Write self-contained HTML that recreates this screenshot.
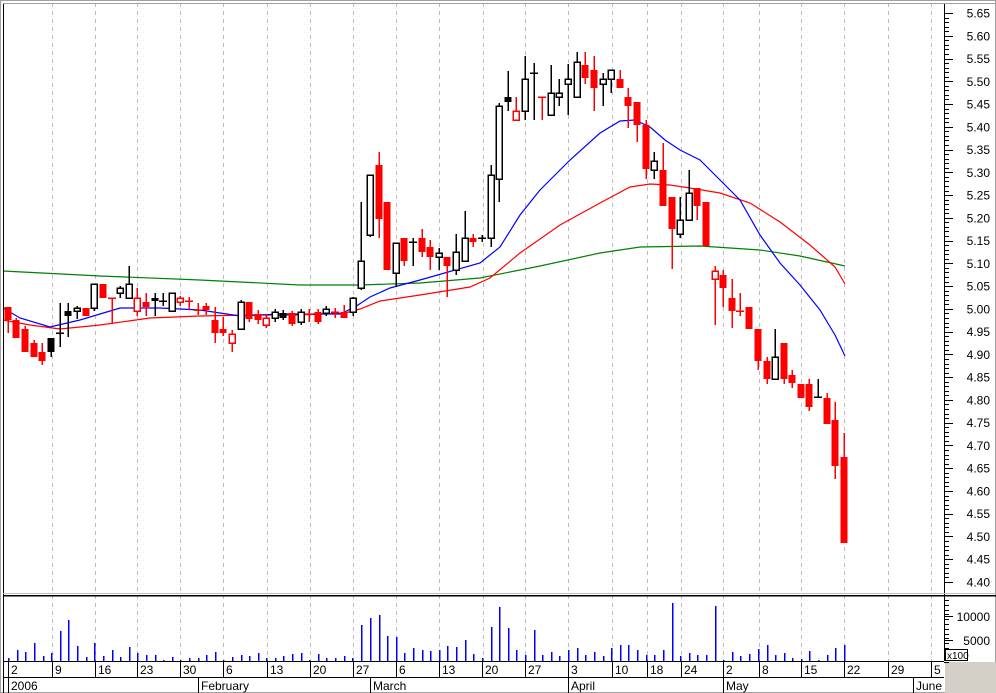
<!DOCTYPE html>
<html><head><meta charset="utf-8">
<style>
html,body{margin:0;padding:0;background:#fff;width:996px;height:693px;overflow:hidden}
svg text{font-family:"Liberation Sans",Arial,sans-serif;font-size:12px;fill:#000}
</style></head><body>
<svg id="s" width="996" height="693" xmlns="http://www.w3.org/2000/svg" shape-rendering="crispEdges">
<rect x="0" y="0" width="996" height="693" fill="#fff"/>
<g id="grid"></g>
<g id="ma" shape-rendering="auto"></g>
<g id="cd"></g>
<g id="vol"></g>
<g id="ax"></g>
</svg>
<script>
var NS="http://www.w3.org/2000/svg";
function el(p,t,a,txt){var e=document.createElementNS(NS,t);for(var k in a)e.setAttribute(k,a[k]);if(txt!=null)e.textContent=txt;document.getElementById(p).appendChild(e);return e;}
// grid dashed verticals
var gx=[52,95,137,180,223,267,310,353,396,439,483,525,568,612,647,681,723,759,801,844,888,931];
gx.forEach(function(x){el('grid','line',{x1:x+.5,y1:3,x2:x+.5,y2:661,stroke:'#bdbdbd','stroke-dasharray':'4,4'});});
// MAs
function pl(pts,c){el('ma','polyline',{points:pts.map(function(p){return p.join(',')}).join(' '),fill:'none',stroke:c,'stroke-width':1.2});}
pl([[3,271],[100,276],[200,280],[300,285],[360,285],[420,283],[480,278],[540,266],[600,253],[640,247],[700,246],[760,250],[800,256],[845,266]],'#008000');
pl([[3,320],[30,325],[60,329],[100,325],[150,318],[200,316],[250,315],[300,315],[345,313],[360,309],[380,301],[420,295],[470,287],[490,278],[520,253],[560,225],[600,203],[630,187],[650,184],[670,185],[690,188],[720,193],[750,203],[780,222],[810,245],[835,267],[845,284]],'#ff0000');
pl([[3,308],[20,318],[50,327],[80,320],[120,308],[160,308],[200,310],[240,316],[280,314],[340,314],[355,307],[370,297],[390,288],[420,280],[480,263],[500,247],[520,215],[540,190],[570,160],[600,133],[620,121],[635,120],[650,127],[665,140],[680,150],[700,160],[720,180],[740,200],[760,235],[780,263],[800,285],[820,310],[835,335],[845,356]],'#0000ff');
// candles [x,hi,lo,top,bot,type] r=red fill, w=hollow black, b=black fill, o=red hollow, c=black cross, rc=red cross
var C=[
[8,307,333,307,320,'r'],[16,318,338,320,338,'r'],[25,326,352,329,352,'r'],[34,340,357,343,357,'r'],[42,343,365,352,361,'r'],
[51,338,357,338,352,'b'],[60,303,347,333,333,'c'],[68,303,337,311,316,'b'],[77,306,319,308,311,'w'],[86,308,316,308,316,'r'],
[94,284,311,284,308,'w'],[103,284,298,284,298,'r'],[112,298,324,298,300,'rc'],[120,286,298,288,293,'w'],[129,266,298,284,298,'w'],
[137,288,316,298,311,'o'],[146,293,316,302,307,'r'],[155,293,316,298,301,'b'],[163,293,306,301,301,'c'],[172,293,311,293,311,'w'],
[180,296,306,298,302,'o'],[189,297,310,301,301,'rc'],[198,303,315,310,310,'rc'],[206,303,315,306,310,'r'],[215,307,343,320,333,'r'],
[223,317,336,329,333,'r'],[232,330,352,334,343,'o'],[241,300,330,302,329,'w'],[249,302,322,302,319,'r'],[258,310,324,314,320,'r'],
[266,314,328,318,325,'o'],[275,309,322,312,318,'w'],[283,310,320,313,318,'b'],[292,311,326,313,324,'r'],[301,309,325,312,322,'w'],
[309,309,322,314,314,'rc'],[318,309,324,312,322,'r'],[326,306,316,309,313,'w'],[335,308,318,312,312,'rc'],[344,305,318,312,318,'r'],
[353,297,316,298,312,'w'],[361,202,290,261,288,'w'],[370,175,237,175,235,'w'],[379,152,238,165,219,'r'],[387,202,270,202,270,'r'],
[396,243,287,243,273,'w'],[404,238,266,238,261,'r'],[413,238,266,242,242,'c'],[422,229,257,238,252,'r'],[430,240,270,247,257,'r'],
[439,248,270,253,257,'w'],[447,257,297,257,266,'r'],[456,234,275,252,270,'w'],[465,211,260,238,261,'w'],[473,234,247,238,242,'r'],
[482,235,242,238,238,'c'],[491,165,247,175,238,'w'],[499,103,202,106,179,'w'],[508,71,111,97,102,'b'],[516,97,120,111,120,'o'],
[525,56,120,79,111,'w'],[534,63,120,73,73,'c'],[542,97,120,97,97,'rc'],[551,65,115,93,115,'w'],[559,79,106,93,97,'w'],
[568,64,115,79,84,'w'],[577,52,97,62,97,'w'],[585,52,84,65,78,'r'],[594,56,111,70,88,'r'],[603,73,106,79,84,'w'],
[611,70,93,70,79,'w'],[620,70,88,79,88,'r'],[628,88,128,97,106,'r'],[637,102,142,102,125,'r'],[646,120,179,125,169,'r'],
[654,152,179,161,170,'w'],[663,143,206,170,206,'r'],[672,197,269,197,229,'r'],[680,197,238,220,234,'w'],[689,170,220,193,220,'w'],
[697,188,220,188,206,'r'],[706,202,246,202,246,'r'],[715,266,325,271,279,'o'],[723,270,307,275,288,'r'],[732,279,328,298,311,'r'],
[740,293,316,311,311,'rc'],[749,307,329,307,329,'r'],[758,329,370,329,361,'r'],[767,357,384,361,379,'r'],[775,329,379,357,379,'w'],
[784,343,384,343,379,'r'],[792,370,388,375,383,'r'],[801,384,398,384,398,'r'],[809,379,411,384,407,'r'],[818,379,397,397,397,'c'],
[827,393,424,398,424,'r'],[835,402,479,420,466,'r'],[844,433,543,457,543,'r']];
C.forEach(function(c){var x=c[0],red=(c[5]=='r'||c[5]=='o'||c[5]=='rc'),col=red?'#ff0000':'#000';
 el('cd','line',{x1:x,y1:c[1],x2:x,y2:c[2],stroke:col,'stroke-width':1.5});
 if(c[5]=='c'||c[5]=='rc'){el('cd','line',{x1:x-4,y1:c[3],x2:x+4,y2:c[3],stroke:col,'stroke-width':1.5});return;}
 var h=Math.max(2,c[4]-c[3]);
 if(c[5]=='r'||c[5]=='b')el('cd','rect',{x:x-3.5,y:c[3],width:7,height:h,fill:col});
 else el('cd','rect',{x:x-3,y:c[3],width:6,height:h,fill:'#fff',stroke:col,'stroke-width':1.5});
});
// volume
var V={8:658,17:650,25:652,34:643,43:656,51:653,60:631,68:620,77:646,86:657,94:643,103:656,112:650,120:657,129:647,137:653,146:655,155:655,163:660,172:657,180:660,189:658,198:658,206:655,215:652,223:660,232:657,241:655,249:656,258:653,266:658,275:658,283:656,292:654,301:653,309:660,318:654,326:658,335:658,344:656,352:658,361:625,370:618,379:615,387:636,396:637,404:653,413:648,422:650,430:651,439:650,447:646,456:647,465:640,473:654,482:658,491:627,499:607,508:628,516:650,525:655,534:630,542:655,551:652,559:656,568:650,577:648,585:655,594:652,603:656,611:648,620:645,628:645,637:650,646:655,654:655,663:650,672:603,680:656,689:653,697:655,706:655,715:606,723:660,732:652,740:656,749:654,758:649,767:645,775:655,784:653,792:658,801:659,809:651,818:660,827:655,835:648,844:645};
for(var k in V)el('vol','line',{x1:+k+.5,y1:V[k],x2:+k+.5,y2:661,stroke:'#0000ff','stroke-width':1.5});
// axes & frame
var A='ax';
el(A,'rect',{x:0.5,y:0.5,width:995,height:692,fill:'none',stroke:'#a0a0a0'});
el(A,'line',{x1:3.5,y1:3,x2:3.5,y2:693,stroke:'#000'});
el(A,'line',{x1:944.5,y1:3,x2:944.5,y2:661,stroke:'#000'});
el(A,'line',{x1:3,y1:3.5,x2:996,y2:3.5,stroke:'#a0a0a0'});
el(A,'line',{x1:3,y1:593.5,x2:996,y2:593.5,stroke:'#c0c0c0'});
el(A,'line',{x1:3,y1:595.5,x2:996,y2:595.5,stroke:'#000','stroke-width':1.5});
el(A,'line',{x1:3,y1:661.5,x2:944,y2:661.5,stroke:'#000'});
el(A,'line',{x1:3,y1:677.5,x2:944,y2:677.5,stroke:'#000'});
el(A,'rect',{x:945,y:662,width:51,height:31,fill:'#d4d0c8'});
// price labels
for(var i=0;i<=25;i++){var p=(5.65-i*0.05).toFixed(2),y=13+i*22.76;
 el(A,'line',{x1:944,y1:Math.round(y)+.5,x2:953,y2:Math.round(y)+.5,stroke:'#000'});
 for(var j=1;j<5&&i<25;j++){var yy=Math.round(y+j*4.55)+.5;el(A,'line',{x1:944,y1:yy,x2:949,y2:yy,stroke:'#000'});}
 el(A,'text',{x:990,y:y+4.5,'text-anchor':'end'},p);}
// volume axis
for(var v=600;v<663;v+=4.8){el(A,'line',{x1:944,y1:Math.round(v)+.5,x2:949,y2:Math.round(v)+.5,stroke:'#000'});}
el(A,'line',{x1:944,y1:616.5,x2:953,y2:616.5,stroke:'#000'});el(A,'line',{x1:944,y1:640.5,x2:953,y2:640.5,stroke:'#000'});
el(A,'text',{x:990,y:621,'text-anchor':'end'},'10000');
el(A,'text',{x:990,y:645,'text-anchor':'end'},'5000');
el(A,'rect',{x:945.5,y:649.5,width:22,height:11,fill:'#fff',stroke:'#000'});
el(A,'text',{x:947,y:659,style:'font-size:10px'},'x100');
// date row
var D=[[8,'2'],[52,'9'],[95,'16'],[137,'23'],[180,'30'],[223,'6'],[267,'13'],[310,'20'],[353,'27'],[396,'6'],[439,'13'],[482,'20'],[525,'27'],[568,'3'],[612,'10'],[647,'18'],[681,'24'],[723,'2'],[759,'8'],[801,'15'],[844,'22'],[888,'29'],[931,'5']];
D.forEach(function(d){el(A,'line',{x1:d[0]+.5,y1:661,x2:d[0]+.5,y2:677,stroke:'#000'});el(A,'text',{x:d[0]+3,y:674},d[1]);});
var M=[[8,'2006'],[198,'February'],[370,'March'],[568,'April'],[723,'May'],[913,'June']];
M.forEach(function(m){el(A,'line',{x1:m[0]+.5,y1:677,x2:m[0]+.5,y2:693,stroke:'#000'});el(A,'text',{x:m[0]+3,y:690},m[1]);});
</script>
</body></html>
